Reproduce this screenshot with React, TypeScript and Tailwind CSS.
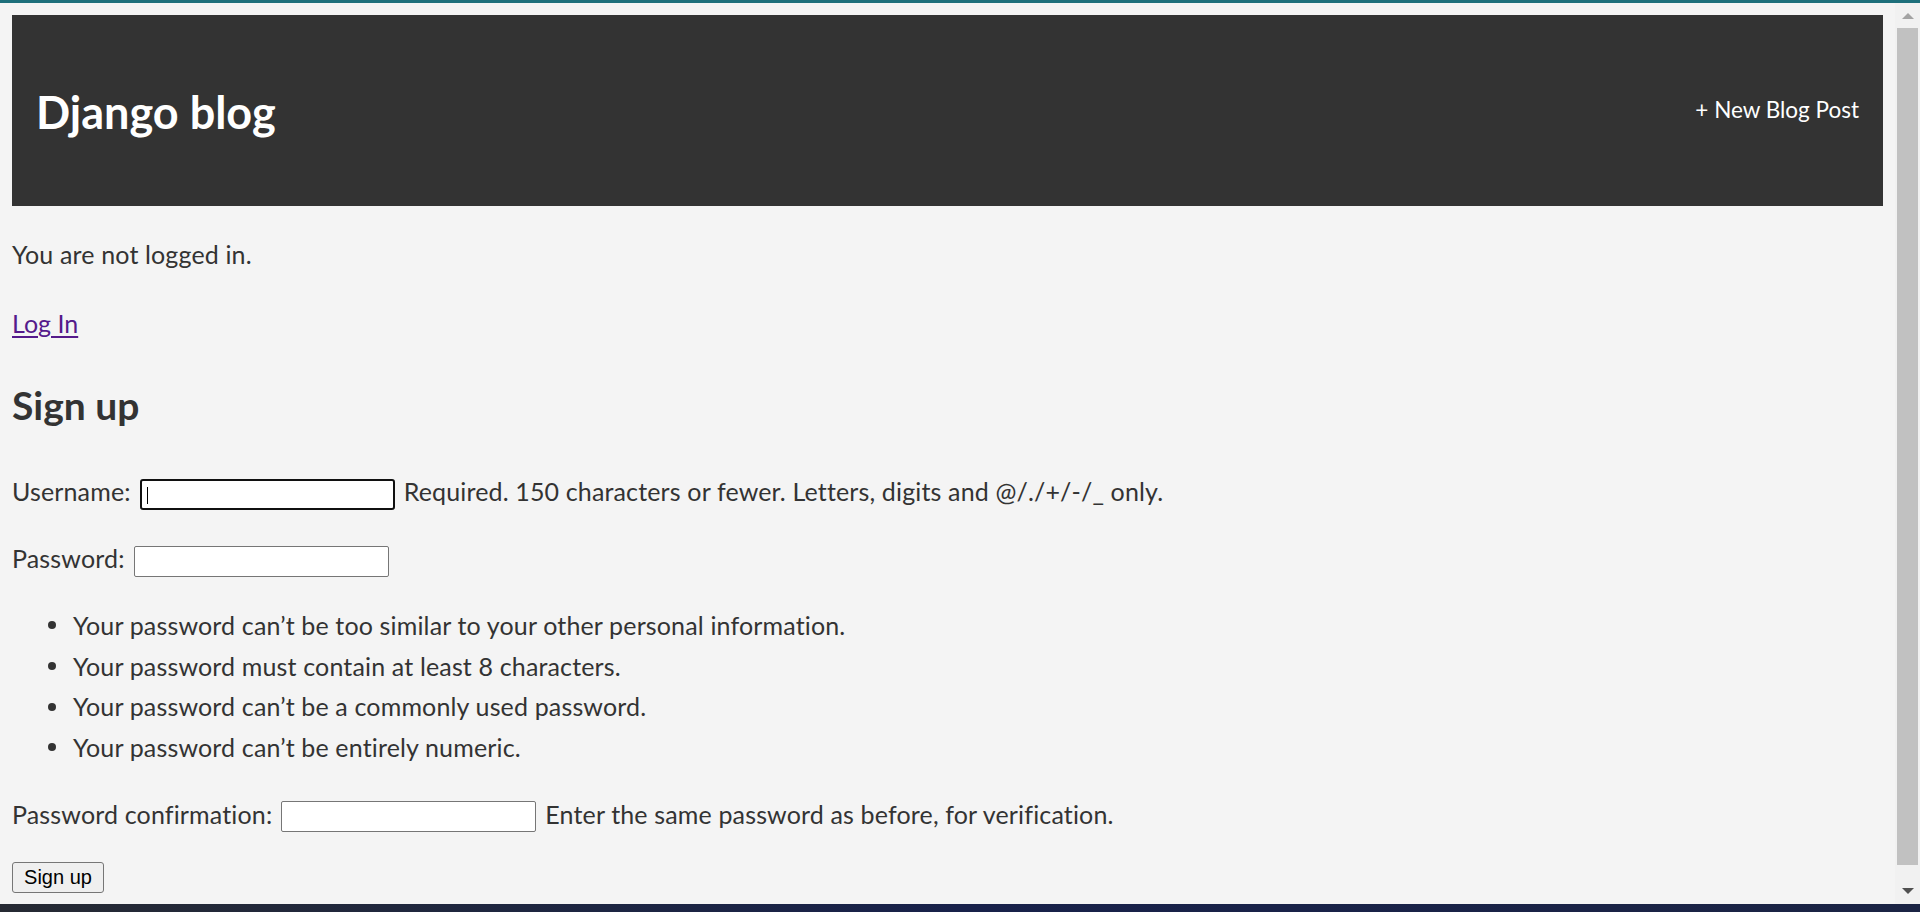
import React from 'react';

const hints = [
  'Your password can’t be too similar to your other personal information.',
  'Your password must contain at least 8 characters.',
  'Your password can’t be a commonly used password.',
  'Your password can’t be entirely numeric.',
];

function Field({ label, help, focused }: { label: string; help?: string; focused?: boolean }) {
  return (
    <div className="flex items-center h-[40px] gap-[9px]">
      <label>{label}</label>
      <div className="relative mt-[6px]">
        <input
          type="text"
          className={
            focused
              ? 'block w-[255px] h-[31px] bg-white border-2 border-[#101010] rounded-[3px] outline-none'
              : 'block w-[255px] h-[31px] bg-white border border-[#767676] rounded-[2px] outline-none'
          }
        />
        {focused && <span className="absolute left-[7px] top-[8px] w-px h-[17px] bg-black" />}
      </div>
      {help && <span>{help}</span>}
    </div>
  );
}

export default function App() {
  return (
    <div className="w-[1920px] h-[912px] overflow-hidden flex flex-col bg-[#f4f4f4] font-['Lato','Noto_Sans',sans-serif] text-[#333]">
      {/* browser accent line */}
      <div className="h-[3px] bg-[#1d6f7b]" />

      <div className="flex flex-1 min-h-0">
        <div className="flex-1 px-[12px] text-[25px] leading-[40px]">
          {/* Header */}
          <header className="mt-[12px] h-[191px] bg-[#333] text-white flex items-center justify-between px-[24px]">
            <h1 className="mt-[3px] text-[45px] leading-none font-bold">Django blog</h1>
            <a href="#" className="text-[22.5px] leading-none">+ New Blog Post</a>
          </header>

          <p className="mt-[28px] tracking-[0.15px]">You are not logged in.</p>
          <p className="mt-[29px]">
            <a href="#" className="underline text-[#551a8b] underline-offset-[3px]">Log In</a>
          </p>

          <h2 className="mt-[38px] text-[39px] leading-[48px] font-bold">Sign up</h2>

          <form className="mt-[42px] tracking-[0.15px]">
            <Field label="Username:" help="Required. 150 characters or fewer. Letters, digits and @/./+/-/_ only." focused />
            <div className="mt-[27px]">
              <Field label="Password:" />
            </div>
            <ul className="mt-[27px]">
              {hints.map((h) => (
                <li key={h} className="flex items-center leading-[40.7px]">
                  <span className="ml-[36px] w-[8px] h-[8px] rounded-full bg-[#333]" />
                  <span className="ml-[17px]">{h}</span>
                </li>
              ))}
            </ul>
            <div className="mt-[26px]">
              <Field label="Password confirmation:" help="Enter the same password as before, for verification." />
            </div>
            <button
              type="button"
              className="mt-[28px] block w-[92px] h-[31px] bg-[#efefef] border border-[#767676] rounded-[3px] font-['Liberation_Sans',Arial,sans-serif] text-[20px] leading-none tracking-normal text-black"
            >
              Sign up
            </button>
          </form>
        </div>

        {/* scrollbar */}
        <div className="w-[25px] bg-[#f1f1f1] flex flex-col items-center">
          <div className="h-[25px] flex items-center justify-center">
            <div className="w-0 h-0 border-l-[6px] border-r-[6px] border-b-[6px] border-l-transparent border-r-transparent border-b-[#a3a3a3]" />
          </div>
          <div className="w-[21px] flex-1 bg-[#c1c1c1]" />
          <div className="h-[39px] flex items-end justify-center pb-[10px]">
            <div className="w-0 h-0 border-l-[6px] border-r-[6px] border-t-[6px] border-l-transparent border-r-transparent border-t-[#505050]" />
          </div>
        </div>
      </div>

      {/* taskbar edge */}
      <div className="h-[8px] bg-gradient-to-r from-[#262a33] via-[#18214a] to-[#1b2444]" />
    </div>
  );
}
